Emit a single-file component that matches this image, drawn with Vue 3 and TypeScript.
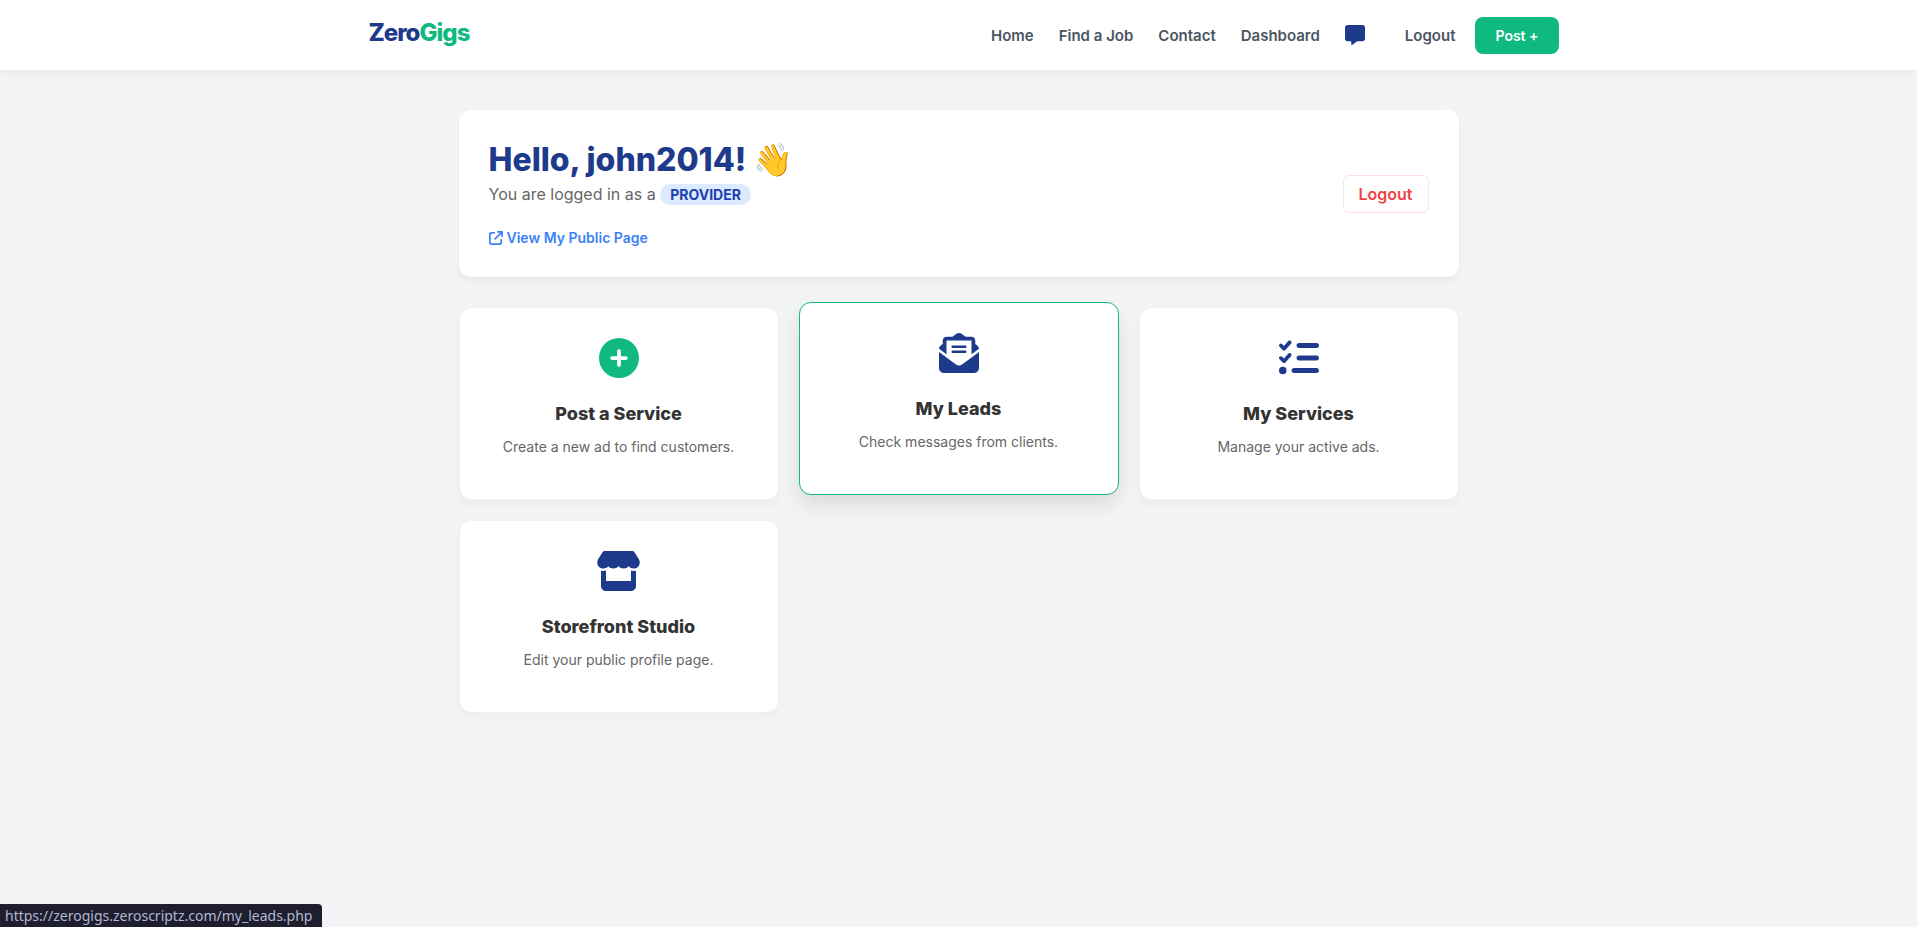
<script setup lang="ts">
interface NavLink {
  label: string
  href: string
}

interface Tile {
  title: string
  text: string
  href: string
  viewBox: string
  path: string
  accent?: boolean
  active?: boolean
}

const links: NavLink[] = [
  { label: 'Home', href: '#home' },
  { label: 'Find a Job', href: '#jobs' },
  { label: 'Contact', href: '#contact' },
  { label: 'Dashboard', href: '#dashboard' },
]

const tiles: Tile[] = [
  {
    title: 'Post a Service',
    text: 'Create a new ad to find customers.',
    href: '#post',
    viewBox: '0 0 512 512',
    accent: true,
    path: 'M256 512A256 256 0 1 0 256 0a256 256 0 1 0 0 512zM232 344l0-64-64 0c-13.3 0-24-10.7-24-24s10.7-24 24-24l64 0 0-64c0-13.3 10.7-24 24-24s24 10.7 24 24l0 64 64 0c13.3 0 24 10.7 24 24s-10.7 24-24 24l-64 0 0 64c0 13.3-10.7 24-24 24s-24-10.7-24-24z',
  },
  {
    title: 'My Leads',
    text: 'Check messages from clients.',
    href: '#leads',
    viewBox: '0 0 512 512',
    active: true,
    path: 'M215.4 96L96 96l0 177.4L.2 202.5c1.6-18.1 10.9-34.9 25.7-45.8L48 140.3 48 96c0-26.5 21.5-48 48-48l76.6 0 49.9-36.9C232.2 3.9 243.9 0 256 0s23.8 3.9 33.5 11L339.4 48 416 48c26.5 0 48 21.5 48 48l0 44.3 22.1 16.4c14.8 10.9 24.1 27.7 25.7 45.8L416 273.4 416 96zM0 448L0 242.1 217.6 403.3c11.1 8.2 24.6 12.7 38.4 12.7s27.3-4.4 38.4-12.7L512 242.1 512 448c0 35.3-28.7 64-64 64L64 512c-35.3 0-64-28.7-64-64zM176 160l160 0c8.8 0 16 7.2 16 16s-7.2 16-16 16l-160 0c-8.8 0-16-7.2-16-16s7.2-16 16-16zm0 64l160 0c8.8 0 16 7.2 16 16s-7.2 16-16 16l-160 0c-8.8 0-16-7.2-16-16s7.2-16 16-16z',
  },
  {
    title: 'My Services',
    text: 'Manage your active ads.',
    href: '#services',
    viewBox: '0 0 512 512',
    path: 'M152.1 38.2c9.9 8.9 10.7 24 1.8 33.9l-72 80c-4.4 4.9-10.6 7.8-17.2 7.9s-12.9-2.4-17.6-7L7 113C-2.3 103.6-2.3 88.4 7 79s24.6-9.4 33.9 0l22.1 22.1 55.1-61.2c8.9-9.9 24-10.7 33.9-1.8zm0 160c9.9 8.9 10.7 24 1.8 33.9l-72 80c-4.4 4.9-10.6 7.8-17.2 7.9s-12.9-2.4-17.6-7L7 273c-9.4-9.4-9.4-24.6 0-33.9s24.6-9.4 33.9 0l22.1 22.1 55.1-61.2c8.9-9.9 24-10.7 33.9-1.8zM224 96c0-17.7 14.3-32 32-32l224 0c17.7 0 32 14.3 32 32s-14.3 32-32 32l-224 0c-17.7 0-32-14.3-32-32zm0 160c0-17.7 14.3-32 32-32l224 0c17.7 0 32 14.3 32 32s-14.3 32-32 32l-224 0c-17.7 0-32-14.3-32-32zM160 416c0-17.7 14.3-32 32-32l288 0c17.7 0 32 14.3 32 32s-14.3 32-32 32l-288 0c-17.7 0-32-14.3-32-32zM48 368a48 48 0 1 1 0 96 48 48 0 1 1 0-96z',
  },
  {
    title: 'Storefront Studio',
    text: 'Edit your public profile page.',
    href: '#storefront',
    viewBox: '0 0 576 512',
    path: 'M547.6 103.8L490.3 13.1C485.2 5 476.1 0 466.4 0L109.6 0C99.9 0 90.8 5 85.7 13.1L28.3 103.8c-29.6 46.8-3.4 111.9 51.9 119.4c4 .5 8.1 .8 12.1 .8c26.1 0 49.3-11.4 65.2-29c15.9 17.6 39.1 29 65.2 29c26.1 0 49.3-11.4 65.2-29c15.9 17.6 39.1 29 65.2 29c26.2 0 49.3-11.4 65.2-29c16 17.6 39.1 29 65.2 29c4.1 0 8.1-.3 12.1-.8c55.5-7.4 81.8-72.5 52.1-119.4zM499.7 254.9c-5.3 .7-10.7 1.1-16.3 1.1c-12.4 0-24.3-1.9-35.4-5.3L448 384l-320 0 0-133.4c-11.2 3.5-23.2 5.4-35.6 5.4c-5.5 0-11-.4-16.3-1.1c-4.1-.6-8.2-1.3-12.1-2.3L64 448c0 35.3 28.7 64 64 64l320 0c35.3 0 64-28.7 64-64l0-195.4c-4 1-8 1.8-12.3 2.3z',
  },
]
</script>

<template>
  <div class="page">
    <header class="topbar">
      <div class="topbar-inner">
        <a class="brand" href="#home">Zero<span>Gigs</span></a>
        <nav class="nav">
          <a v-for="link in links" :key="link.label" class="nav-link" :href="link.href">{{ link.label }}</a>
          <a class="nav-chat" href="#messages" aria-label="Messages">
            <svg viewBox="0 0 512 512" aria-hidden="true">
              <path d="M64 0C28.7 0 0 28.7 0 64L0 352c0 35.3 28.7 64 64 64l96 0 0 80c0 6.1 3.4 11.6 8.8 14.3s11.9 2.1 16.8-1.5L309.3 416 448 416c35.3 0 64-28.7 64-64l0-288c0-35.3-28.7-64-64-64L64 0z" />
            </svg>
          </a>
          <a class="nav-link" href="#logout">Logout</a>
          <a class="nav-post" href="#post">Post +</a>
        </nav>
      </div>
    </header>

    <main class="content">
      <section class="welcome">
        <div>
          <h1>Hello, john2014! 👋</h1>
          <p class="role">You are logged in as a <span class="badge">PROVIDER</span></p>
          <a class="public-link" href="#profile">
            <svg viewBox="0 0 512 512" aria-hidden="true">
              <path d="M320 0c-17.7 0-32 14.3-32 32s14.3 32 32 32l82.7 0L201.4 265.4c-12.5 12.5-12.5 32.8 0 45.3s32.8 12.5 45.3 0L448 109.3l0 82.7c0 17.7 14.3 32 32 32s32-14.3 32-32l0-160c0-17.7-14.3-32-32-32L320 0zM80 32C35.8 32 0 67.8 0 112L0 432c0 44.2 35.8 80 80 80l320 0c44.2 0 80-35.8 80-80l0-112c0-17.7-14.3-32-32-32s-32 14.3-32 32l0 112c0 8.8-7.2 16-16 16L80 448c-8.8 0-16-7.2-16-16l0-320c0-8.8 7.2-16 16-16l112 0c17.7 0 32-14.3 32-32s-14.3-32-32-32L80 32z" />
            </svg>
            View My Public Page
          </a>
        </div>
        <a class="logout" href="#logout">Logout</a>
      </section>

      <section class="tiles">
        <a
          v-for="tile in tiles"
          :key="tile.title"
          class="tile"
          :class="{ active: tile.active }"
          :href="tile.href"
        >
          <svg class="tile-icon" :class="{ accent: tile.accent }" :viewBox="tile.viewBox" aria-hidden="true">
            <path :d="tile.path" />
          </svg>
          <h2>{{ tile.title }}</h2>
          <p>{{ tile.text }}</p>
        </a>
      </section>
    </main>

    <div class="status">https://zerogigs.zeroscriptz.com/my_leads.php</div>
  </div>
</template>

<style>
body {
  margin: 0;
  background: #f3f4f6;
}
</style>

<style scoped>
.page {
  min-height: 100vh;
  font-family: Inter, 'Liberation Sans', sans-serif;
  color: #333;
}

.page,
.page * {
  box-sizing: border-box;
}

a {
  text-decoration: none;
}

.topbar {
  background: #fff;
  box-shadow: 0 2px 10px rgba(0, 0, 0, 0.05);
}

.topbar-inner {
  display: flex;
  align-items: center;
  justify-content: space-between;
  max-width: 1200px;
  height: 70px;
  margin: 0 auto;
  padding-left: 10px;
}

.brand {
  padding-bottom: 4px;
  font-size: 24px;
  font-weight: 800;
  line-height: 28px;
  letter-spacing: -1px;
  color: #1e3a8a;
}

.brand span {
  color: #10b981;
}

.nav {
  display: flex;
  align-items: center;
  gap: 25px;
}

.nav-link {
  font-size: 15px;
  font-weight: 600;
  color: #4b5563;
}

.nav-chat {
  display: flex;
  margin-right: 15px;
}

.nav-chat svg {
  width: 20px;
  height: 20px;
  fill: #1e3a8a;
}

.nav-post {
  margin-left: -5px;
  padding: 10px 20px;
  border-radius: 8px;
  background: #10b981;
  font-size: 14px;
  font-weight: 600;
  line-height: 17px;
  color: #fff;
}

.content {
  max-width: 1000px;
  margin: 40px auto;
}

.welcome {
  display: flex;
  align-items: center;
  justify-content: space-between;
  margin-bottom: 30px;
  padding: 30px;
  border-radius: 12px;
  background: #fff;
  box-shadow: 0 4px 6px rgba(0, 0, 0, 0.05);
}

h1 {
  margin: 0;
  font-size: 32px;
  font-weight: 800;
  line-height: 39px;
  color: #1e3a8a;
}

.role {
  margin: 4px 0 0;
  font-size: 16px;
  line-height: 22px;
  color: #666;
}

.badge {
  display: inline-block;
  padding: 2px 10px;
  border-radius: 20px;
  background: #dbeafe;
  font-size: 14px;
  font-weight: 700;
  line-height: 17px;
  color: #1e40af;
}

.public-link {
  display: flex;
  align-items: center;
  gap: 4px;
  width: fit-content;
  margin-top: 24px;
  font-size: 14px;
  font-weight: 600;
  line-height: 18px;
  color: #3b82f6;
}

.public-link svg {
  width: 14px;
  height: 14px;
  fill: currentColor;
}

.logout {
  padding: 8px 15px;
  border: 1px solid #fee2e2;
  border-radius: 6px;
  font-size: 16px;
  font-weight: 600;
  line-height: 20px;
  color: #ef4444;
}

.tiles {
  display: grid;
  grid-template-columns: repeat(auto-fit, minmax(250px, 1fr));
  gap: 20px;
}

.tile {
  display: flex;
  flex-direction: column;
  align-items: center;
  padding: 30px 30px 42px;
  border: 1px solid #f0f1f3;
  border-radius: 12px;
  background: #fff;
  background-clip: padding-box;
  box-shadow: 0 4px 10px rgba(0, 0, 0, 0.04);
  text-align: center;
}

.tile.active {
  border-color: #10b981;
  box-shadow: 0 10px 20px rgba(0, 0, 0, 0.1);
  transform: translateY(-5px);
}

.tile-icon {
  height: 40px;
  fill: #1e3a8a;
}

.tile-icon.accent {
  fill: #10b981;
}

.tile h2 {
  margin: 25px 0 12px;
  font-size: 18px;
  font-weight: 800;
  line-height: 22px;
  color: #333;
}

.tile p {
  margin: 0;
  font-size: 14px;
  line-height: 20px;
  color: #666;
}

.status {
  position: fixed;
  bottom: 0;
  left: 0;
  padding: 0 10px 0 5px;
  border-top-right-radius: 4px;
  background: #1e1e2e;
  font-family: 'Noto Sans', sans-serif;
  font-size: 14px;
  line-height: 23px;
  color: #b4b8d4;
}
</style>
